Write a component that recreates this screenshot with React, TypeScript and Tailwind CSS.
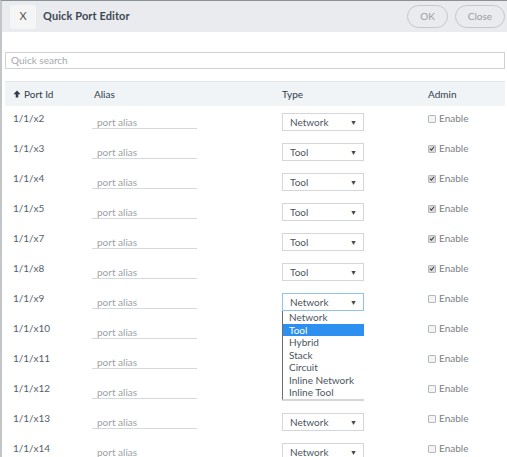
import React from 'react';

type Row = { id: string; type: string; admin: boolean };

const rows: Row[] = [
  { id: '1/1/x2', type: 'Network', admin: false },
  { id: '1/1/x3', type: 'Tool', admin: true },
  { id: '1/1/x4', type: 'Tool', admin: true },
  { id: '1/1/x5', type: 'Tool', admin: true },
  { id: '1/1/x7', type: 'Tool', admin: true },
  { id: '1/1/x8', type: 'Tool', admin: true },
  { id: '1/1/x9', type: 'Network', admin: false },
  { id: '1/1/x10', type: 'Network', admin: false },
  { id: '1/1/x11', type: 'Network', admin: false },
  { id: '1/1/x12', type: 'Network', admin: false },
  { id: '1/1/x13', type: 'Network', admin: false },
  { id: '1/1/x14', type: 'Network', admin: false },
];

const options = ['Network', 'Tool', 'Hybrid', 'Stack', 'Circuit', 'Inline Network', 'Inline Tool'];

// index of the row whose select is open
const OPEN_ROW = 6;

function Checkbox({ checked }: { checked: boolean }) {
  return (
    <span
      className={`w-[8px] h-[8px] border border-[#b5b9bd] rounded-[1px] flex items-center justify-center ${
        checked ? 'bg-[#d8dadc]' : 'bg-[#f3f4f5]'
      }`}
    >
      {checked && (
        <svg viewBox="0 0 8 8" className="w-[7px] h-[7px]">
          <path d="M1.2 4.2 L3.2 6.2 L6.8 1.6" fill="none" stroke="#444" strokeWidth="1.4" />
        </svg>
      )}
    </span>
  );
}

function Select({ value, open, covered }: { value: string; open?: boolean; covered?: boolean }) {
  return (
    <div className="relative">
      <div
        className={`w-[82px] h-[18px] border flex items-center justify-between pl-[7px] pr-[6px] bg-white ${
          open ? 'border-[#8ec3f0]' : 'border-[#d4d7da]'
        }`}
      >
        {!covered && (
          <>
            <span className="text-[10px] text-[#4b5560]">{value}</span>
            <span className="text-[7px] text-[#444]">▼</span>
          </>
        )}
      </div>
      {open && (
        <div className="absolute left-0 top-[18px] w-[82px] z-10 bg-white border-l border-[#6b6f74] border-b border-b-[#d4d7da]">
          {options.map((o) => (
            <div
              key={o}
              className={`h-[12.5px] leading-[12.5px] pl-[6px] text-[10px] ${
                o === 'Tool' ? 'bg-[#2d8ff0] text-white' : 'text-[#4b5560]'
              }`}
            >
              {o}
            </div>
          ))}
        </div>
      )}
    </div>
  );
}

export default function App() {
  return (
    <div className="w-[507px] h-[457px] overflow-hidden bg-white border-t border-t-[#8c9196] border-l-2 border-l-[#c3c6c9] font-['Lato',sans-serif]">
      {/* Header */}
      <div className="h-[31px] bg-[#e9ebee] flex items-center pl-[8px] pr-[2px]">
        <div className="w-[26px] h-[24px] bg-[#f5f5f6] rounded-[2px] flex items-center justify-center text-[11px] text-[#555]">
          X
        </div>
        <div className="ml-[7px] text-[11px] font-bold text-[#3e4853] tracking-[0.1px]">Quick Port Editor</div>
        <div className="ml-auto flex gap-[7px]">
          <button className="w-[41px] h-[23px] rounded-full border border-[#c5c8cb] text-[10px] text-[#9a9ea2]">
            OK
          </button>
          <button className="w-[50px] h-[23px] rounded-full border border-[#c5c8cb] text-[10px] text-[#9a9ea2]">
            Close
          </button>
        </div>
      </div>

      {/* Search */}
      <div className="pt-[20px] pl-[3px] pr-[2px]">
        <div className="h-[17px] border border-[#cfd2d5] flex items-center pl-[5px] text-[10px] text-[#a4a8ac]">
          Quick search
        </div>
      </div>

      {/* Table */}
      <div className="mt-[12px] pl-[3px] pr-[2px]">
        <div className="h-[25px] bg-[#f1f4f7] border-t border-[#e3e7ea] flex items-center text-[10px] text-[#2f3d4b]">
          <div className="w-[79px] pl-[8px] flex items-center gap-[3px]">
            <svg viewBox="0 0 10 10" className="w-[8px] h-[8px]">
              <path d="M5 0.5 L9.5 5.2 L6.6 5.2 L6.6 9.5 L3.4 9.5 L3.4 5.2 L0.5 5.2 Z" fill="#2f3d4b" />
            </svg>
            <span>Port Id</span>
          </div>
          <div className="w-[198px] pl-[10px]">Alias</div>
          <div className="w-[146px]">Type</div>
          <div>Admin</div>
        </div>

        {rows.map((r, i) => (
          <div key={r.id} className="h-[30px] flex items-start text-[10px]">
            <div className="w-[87px] pl-[8px] pt-[5px] text-[#56606a]">{r.id}</div>
            <div className="w-[105px] mt-[10px] h-[13px] border-b border-[#d6d9dc] pl-[5px] text-[#9ca1a6] leading-[12px]">
              port alias
            </div>
            <div className="w-[85px]" />
            <div className="w-[146px] pt-[7px]">
              <Select
                value={r.type}
                open={i === OPEN_ROW}
                covered={i > OPEN_ROW && i <= OPEN_ROW + 3}
              />
            </div>
            <div className="pt-[5px] flex items-center gap-[3px] text-[#7a8086]">
              <Checkbox checked={r.admin} />
              <span>Enable</span>
            </div>
          </div>
        ))}
      </div>
    </div>
  );
}
